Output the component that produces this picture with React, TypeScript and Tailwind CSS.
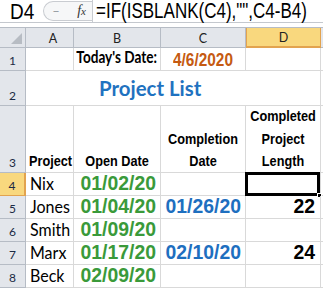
import React from "react";

const arial = "font-['Liberation_Sans',Arial,sans-serif]";
const calibri = "font-['Lato','Noto_Sans',sans-serif]";

const cell = "border-r border-b border-[#d9d9d9] flex items-end min-w-0 whitespace-nowrap leading-none";
const colHead =
  "border-r border-b border-[#b6bcc5] bg-[#e3e6eb] flex items-end justify-center pb-[2px] text-[12.5px] leading-none text-[#222]";
const rowHead =
  "border-r border-b border-[#b6bcc5] bg-[#e3e6eb] flex items-end justify-center pb-[3px] text-[12px] leading-none text-[#1b2a44]";

// text stretched a little taller than the font draws it
const tall = "inline-block origin-bottom";

const rows = [
  { n: 4, name: "Nix", open: "01/02/20", done: "", len: "" },
  { n: 5, name: "Jones", open: "01/04/20", done: "01/26/20", len: "22" },
  { n: 6, name: "Smith", open: "01/09/20", done: "", len: "" },
  { n: 7, name: "Marx", open: "01/17/20", done: "02/10/20", len: "24" },
  { n: 8, name: "Beck", open: "02/09/20", done: "", len: "" },
];

function FormulaBar() {
  return (
    <div className="flex h-[23px] items-center border-b border-[#c4c8ce] bg-white">
      <div className={`w-[43px] shrink-0 pl-[10px] text-[19px] leading-none text-black ${arial}`}>
        <span className={`${tall} origin-center scale-y-[1.18]`}>D4</span>
      </div>
      <div className="relative flex h-[20px] w-[49px] shrink-0 items-center rounded-l-full border border-r-0 border-[#c9ccd1] bg-[#f6f7f8]">
        <span className="ml-[9px] text-[12px] leading-none text-[#9aa0a6]">–</span>
        <span className="ml-auto mr-[6px] font-['Liberation_Serif',serif] text-[14px] italic leading-none text-[#333]">
          f<span className="text-[11px]">x</span>
        </span>
      </div>
      <div className="h-full w-px shrink-0 bg-[#c9ccd1]" />
      <div className={`whitespace-nowrap pl-[3px] text-[17px] leading-none text-black ${arial}`}>
        <span className={`${tall} origin-center scale-y-[1.27]`}>=IF(ISBLANK(C4),"",C4-B4)</span>
      </div>
    </div>
  );
}

function HeadLines({ lines }: { lines: string[] }) {
  return (
    <div className={`flex w-full flex-col items-center gap-[9.8px] pb-[3px] text-[12.7px] font-bold leading-none text-black ${arial}`}>
      {lines.map((l) => (
        <span key={l} className={`${tall} scale-y-[1.15]`}>
          {l}
        </span>
      ))}
    </div>
  );
}

export default function App() {
  return (
    <div className="relative h-[289px] w-[323px] overflow-hidden bg-white">
      <FormulaBar />
      <div className="h-[4px] bg-white" />
      <div className="grid grid-cols-[26px_48px_87px_85px_75px_2px] grid-rows-[20px_23px_35px_67px_23px_23px_23px_23px_23px] border-t border-[#b6bcc5]">
        {/* column headers */}
        <div className={`${colHead} relative`}>
          <div className="absolute bottom-[3px] right-[3px] h-0 w-0 border-b-[11px] border-l-[11px] border-b-[#b7bcc3] border-l-transparent" />
        </div>
        <div className={`${colHead} pl-[7px] ${calibri}`}>A</div>
        <div className={`${colHead} ${calibri}`}>B</div>
        <div className={`${colHead} ${calibri}`}>C</div>
        <div
          className={`flex items-end justify-center border-x border-b-2 border-[#e2a34f] bg-[#f9d87e] pb-[2px] text-[12.5px] leading-none text-[#222] ${calibri}`}
        >
          D
        </div>
        <div className="border-b border-[#b6bcc5] bg-[#e3e6eb]" />

        {/* row 1 */}
        <div className={`${rowHead} ${calibri}`}>1</div>
        <div className={cell} />
        <div className={`${cell} justify-end pb-[3px] pr-[3px] text-[13.6px] font-bold text-black ${calibri}`}>
          <span className={`${tall} scale-y-[1.2]`}>Today's Date:</span>
        </div>
        <div className={`${cell} justify-center pb-[2px] text-[15.4px] font-bold text-[#c55a11] ${arial}`}>
          <span className={`${tall} scale-y-[1.2]`}>4/6/2020</span>
        </div>
        <div className={cell} />
        <div className="border-b border-[#d9d9d9]" />

        {/* row 2 */}
        <div className={`${rowHead} ${calibri}`}>2</div>
        <div className={`col-span-4 ${cell} pb-[7px] pl-[73px] text-[20.4px] font-bold text-[#1f72c0] ${calibri}`}>
          <span className={`${tall} scale-y-[1.05]`}>Project List</span>
        </div>
        <div className="border-b border-[#d9d9d9]" />

        {/* row 3 */}
        <div className={`${rowHead} ${calibri}`}>3</div>
        <div className={`${cell} pb-[3px] pl-[3px] text-[12.7px] font-bold text-black ${arial}`}>
          <span className={`${tall} scale-y-[1.15]`}>Project</span>
        </div>
        <div className={`${cell} justify-center pb-[3px] text-[12.7px] font-bold text-black ${arial}`}>
          <span className={`${tall} scale-y-[1.15]`}>Open Date</span>
        </div>
        <div className={cell}>
          <HeadLines lines={["Completion", "Date"]} />
        </div>
        <div className={cell}>
          <HeadLines lines={["Completed", "Project", "Length"]} />
        </div>
        <div className="border-b border-[#d9d9d9]" />

        {/* data rows */}
        {rows.map((r) => (
          <React.Fragment key={r.n}>
            <div
              className={
                r.n === 4
                  ? `flex items-end justify-center border-b border-r-2 border-[#e2a34f] bg-[#f9d87e] pb-[3px] text-[12px] leading-none text-[#1b2a44] ${calibri}`
                  : `${rowHead} ${calibri}`
              }
            >
              {r.n}
            </div>
            <div className={`${cell} pb-[3px] pl-[4px] text-[16px] text-black ${calibri}`}>
              <span className={`${tall} scale-y-[1.1]`}>{r.name}</span>
            </div>
            <div className={`${cell} justify-end pb-[2px] pr-[4px] text-[19.4px] font-bold text-[#3a9a3a] ${arial}`}>
              {r.open}
            </div>
            <div className={`${cell} justify-end pb-[2px] pr-[4px] text-[19.4px] font-bold text-[#1e6fbf] ${arial}`}>
              {r.done}
            </div>
            <div className={`${cell} relative justify-end pb-[2px] pr-[5px] text-[19.4px] font-bold text-black ${arial}`}>
              {r.len}
              {r.n === 4 && (
                <>
                  <div className="absolute -left-px -top-px bottom-[-1px] right-0 border-[3px] border-black" />
                  <div className="absolute bottom-[-3px] right-[-2px] h-[5px] w-[5px] border border-white bg-black" />
                </>
              )}
            </div>
            <div className="border-b border-[#d9d9d9]" />
          </React.Fragment>
        ))}
      </div>
    </div>
  );
}
